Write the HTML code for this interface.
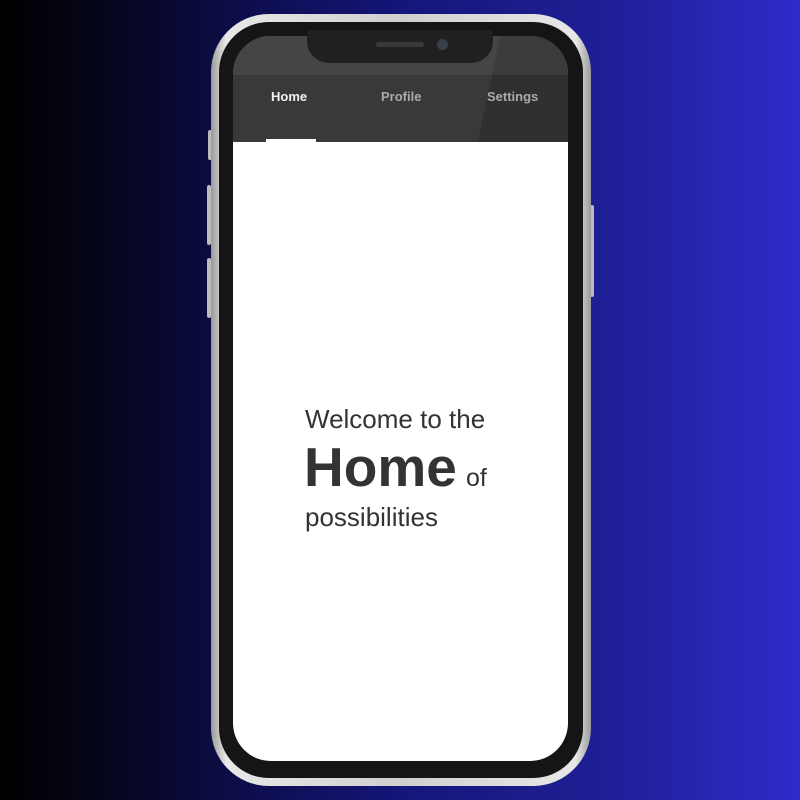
<!DOCTYPE html>
<html><head><style>
*{margin:0;padding:0;box-sizing:border-box}
body{width:800px;height:800px;overflow:hidden;background:linear-gradient(90deg,#000 0%,#050518 12%,#0c0c45 28%,#15157a 50%,#1f1f95 75%,#2e2bc9 100%);font-family:"Liberation Sans",sans-serif;position:relative}
.frame{position:absolute;left:211px;top:14px;width:380px;height:772px;border-radius:58px;background:linear-gradient(90deg,#9a9a9a,#e8e8e8 4%,#cfcfcf 50%,#e8e8e8 96%,#9a9a9a);}
.bezel{position:absolute;left:219px;top:22px;width:364px;height:756px;border-radius:50px;background:#151515}
.screen{position:absolute;left:233px;top:36px;width:335px;height:725px;border-radius:38px;background:#fff;overflow:hidden}
.hdr{position:absolute;left:0;top:0;width:100%;height:106px;background:#393939}
.status{position:absolute;left:0;top:0;width:100%;height:39px;background:#454545}
.shade{position:absolute;left:256px;top:0;width:140px;height:106px;background:rgba(0,0,0,.14);transform:skewX(-12deg)}
.notch{position:absolute;left:307px;top:30px;width:186px;height:33px;background:#202020;border-radius:0 0 22px 22px}
.spk{position:absolute;left:376px;top:42px;width:48px;height:5px;border-radius:3px;background:#3a3a3a}
.cam{position:absolute;left:437px;top:39px;width:11px;height:11px;border-radius:50%;background:#3a3e4a}
.tab{position:absolute;top:89px;font-size:13px;color:#aaa}
.ind{position:absolute;left:266px;top:139px;width:50px;height:3px;background:#fff}
.btn{position:absolute;background:#bbb;width:4px;border-radius:2px}
.t1{position:absolute;left:305px;top:404px;font-size:26px;color:#333}
.t2{position:absolute;left:304px;top:435px;font-size:55px;font-weight:bold;color:#333}
.t3{position:absolute;left:466px;top:464px;font-size:25px;color:#333}
.t4{position:absolute;left:305px;top:502px;font-size:26px;color:#333}
</style></head><body>
<div class="btn" style="left:208px;top:130px;height:30px"></div>
<div class="btn" style="left:207px;top:185px;height:60px"></div>
<div class="btn" style="left:207px;top:258px;height:60px"></div>
<div class="btn" style="left:590px;top:205px;height:92px"></div>
<div class="frame"></div>
<div class="bezel"></div>
<div class="screen"><div class="hdr"></div><div class="status"></div><div class="shade"></div></div>
<div class="notch"></div><div class="spk"></div><div class="cam"></div>
<div class="tab" style="left:271px;color:#f2f2f2;font-weight:bold">Home</div>
<div class="tab" style="left:381px;font-weight:bold">Profile</div>
<div class="tab" style="left:487px;font-weight:bold">Settings</div>
<div class="ind"></div>
<div class="t1">Welcome to the</div>
<div class="t2">Home</div>
<div class="t3">of</div>
<div class="t4">possibilities</div>
</body></html>
